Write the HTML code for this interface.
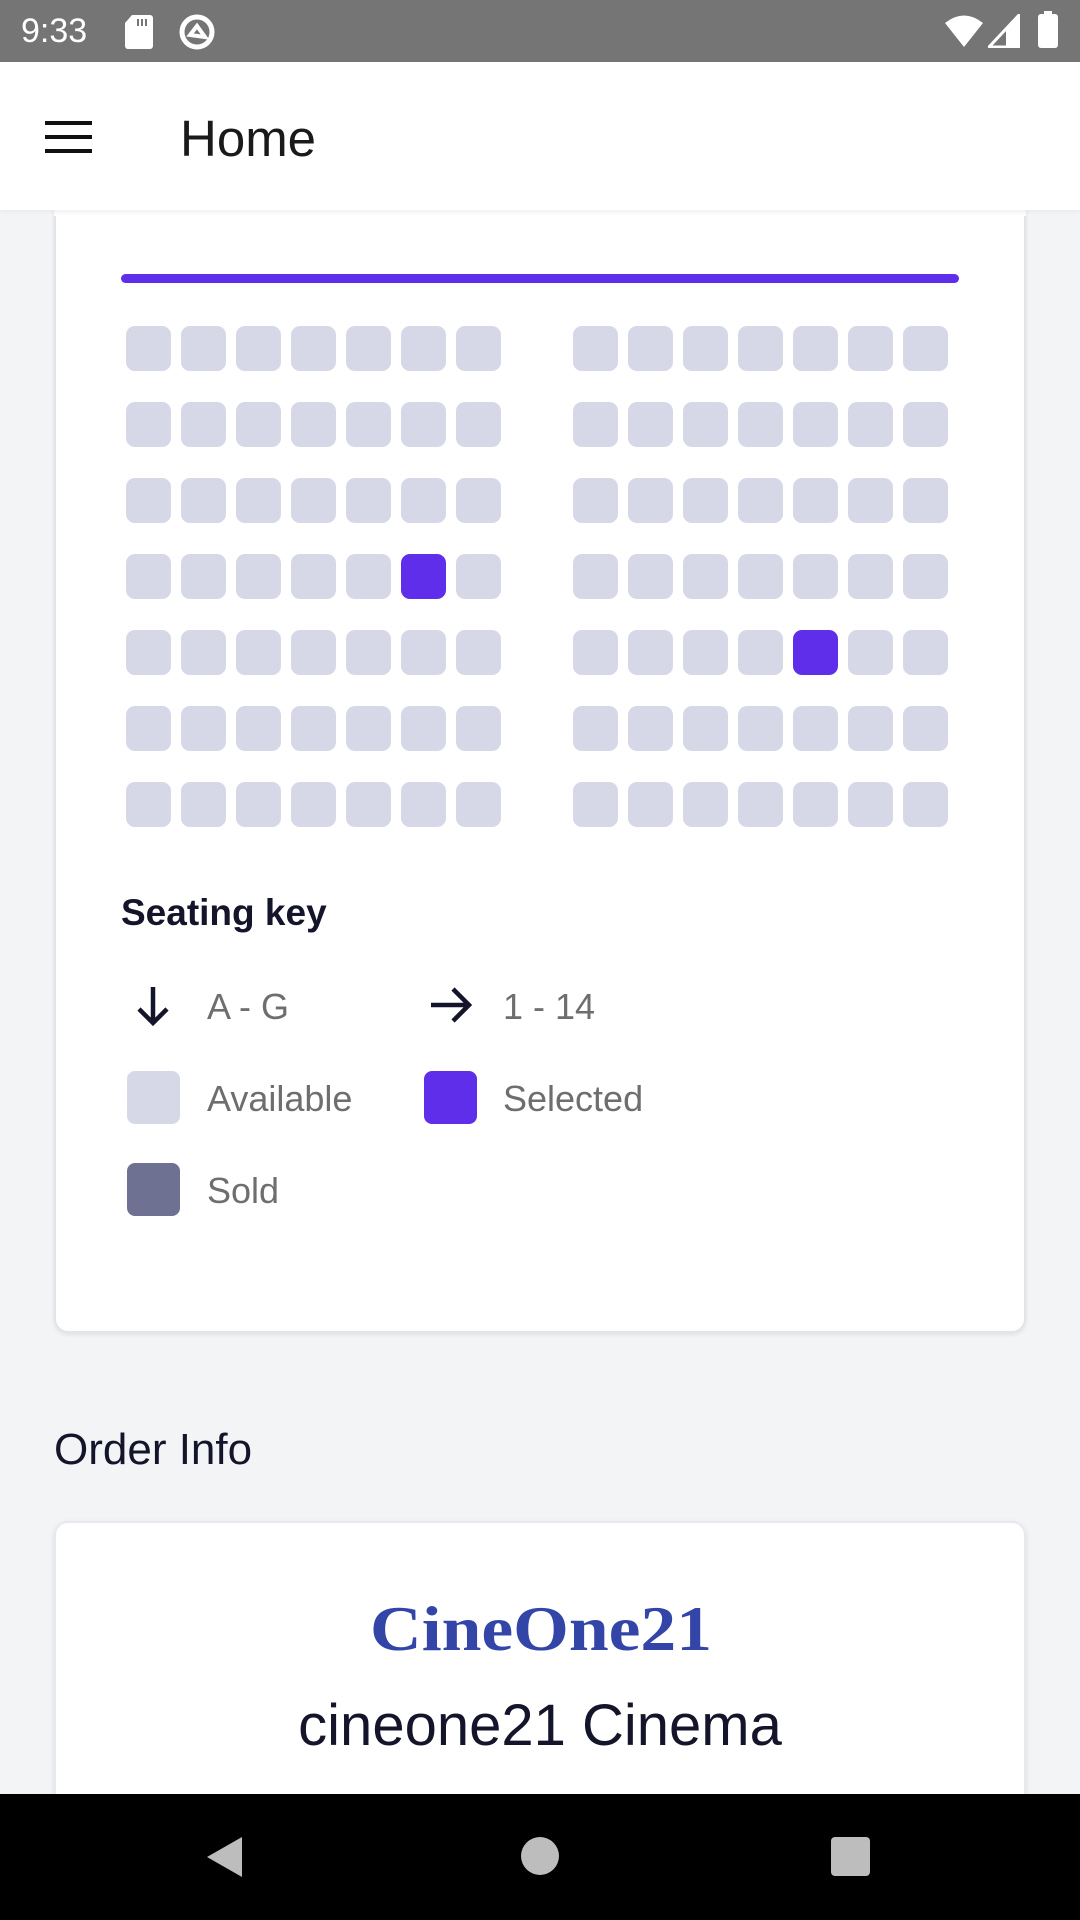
<!DOCTYPE html>
<html style="overflow:hidden;width:1080px;height:1920px"><head><meta charset="utf-8"><style>
*{margin:0;padding:0;box-sizing:border-box}
html,body{overflow:hidden}
body{width:1080px;height:1920px;background:#f3f4f6;font-family:"Liberation Sans",Roboto,sans-serif;position:relative;overflow:hidden}
.abs{position:absolute}
.seat{position:absolute;width:45px;height:45px;border-radius:9px;background:#d7d8e7}
.sel{background:#5f2eea}
.key{position:absolute;font-size:36px;color:#6e6e6e;line-height:1}
</style></head><body>
<!-- status bar -->
<div class="abs" style="left:0;top:0;width:1080px;height:62px;background:#757575"></div>
<div class="abs" style="left:21px;top:12px;font-size:34px;color:#fff;line-height:38px">9:33</div>
<svg class="abs" style="left:124px;top:15px" width="30" height="34" viewBox="0 0 30 34"><path d="M8 0H26a3 3 0 0 1 3 3V31a3 3 0 0 1-3 3H4a3 3 0 0 1-3-3V8Z" fill="#fff"/><rect x="13" y="4" width="2" height="7" fill="#757575"/><rect x="17" y="4" width="2" height="7" fill="#757575"/><rect x="21" y="4" width="2" height="7" fill="#757575"/></svg>
<svg class="abs" style="left:178px;top:13px" width="38" height="38" viewBox="0 0 38 38"><circle cx="19" cy="19" r="15" fill="none" stroke="#fff" stroke-width="5"/><path d="M12 22 L19 13 L27 24 Z" fill="none" stroke="#fff" stroke-width="4"/></svg>
<svg class="abs" style="left:944px;top:14px" width="40" height="34" viewBox="0 0 40 34"><path d="M1 9 Q20 -6 39 9 L20 33 Z" fill="#fff"/></svg>
<svg class="abs" style="left:988px;top:14px" width="32" height="34" viewBox="0 0 32 34"><path d="M31 1 V33 H1 Z" fill="none" stroke="#fff" stroke-width="3"/><path d="M31 1 V33 H18 V16 Z" fill="#fff"/></svg>
<div class="abs" style="left:1038px;top:14px;width:20px;height:34px;background:#fff;border-radius:3px"></div>
<div class="abs" style="left:1044px;top:11px;width:8px;height:4px;background:#fff"></div>
<!-- app bar -->
<div class="abs" style="left:0;top:62px;width:1080px;height:148px;background:#fff;box-shadow:0 2px 3px rgba(0,0,0,0.04)"></div>
<div class="abs" style="left:45px;top:121px;width:47px;height:4px;background:#111"></div>
<div class="abs" style="left:45px;top:135px;width:47px;height:4px;background:#111"></div>
<div class="abs" style="left:45px;top:149px;width:47px;height:4px;background:#111"></div>
<div class="abs" style="left:180px;top:109px;font-size:51px;color:#1a1a1a;line-height:60px">Home</div>
<!-- card 1 -->
<div class="abs" style="left:54px;top:150px;width:972px;height:1183px;background:#fff;border:2px solid #e3e4ea;border-top:none;border-radius:0 0 14px 14px;box-shadow:0 2px 4px rgba(0,0,0,0.08);z-index:-1"></div>
<div class="abs" style="left:54px;top:210px;width:972px;height:6px;background:linear-gradient(#f2f2f2,#fff)"></div>
<div class="abs" style="left:121px;top:274px;width:838px;height:9px;border-radius:5px;background:#5f2eea"></div>
<div id="seats"></div>
<div class="abs" style="left:121px;top:893px;font-size:37px;font-weight:bold;color:#14142b;line-height:40px">Seating key</div>
<svg class="abs" style="left:131px;top:983px" width="44" height="44" viewBox="0 0 44 44"><path d="M22 4 V40 M8 26 L22 40 L36 26" fill="none" stroke="#14142b" stroke-width="4.5"/></svg>
<div class="key" style="left:207px;top:989px">A - G</div>
<svg class="abs" style="left:428px;top:983px" width="46" height="44" viewBox="0 0 46 44"><path d="M3 22 H41 M25 6 L41 22 L25 38" fill="none" stroke="#14142b" stroke-width="4.5"/></svg>
<div class="key" style="left:503px;top:989px">1 - 14</div>
<div class="abs" style="left:127px;top:1071px;width:53px;height:53px;border-radius:8px;background:#d7d8e7"></div>
<div class="key" style="left:207px;top:1081px">Available</div>
<div class="abs" style="left:424px;top:1071px;width:53px;height:53px;border-radius:8px;background:#5f2eea"></div>
<div class="key" style="left:503px;top:1081px">Selected</div>
<div class="abs" style="left:127px;top:1163px;width:53px;height:53px;border-radius:8px;background:#6e7191"></div>
<div class="key" style="left:207px;top:1173px">Sold</div>
<!-- order info -->
<div class="abs" style="left:54px;top:1427px;font-size:44px;font-weight:500;color:#14142b;line-height:46px">Order Info</div>
<div class="abs" style="left:54px;top:1521px;width:972px;height:399px;background:#fff;border:2px solid #e8e9ee;border-bottom:none;border-radius:14px 14px 0 0;box-shadow:0 2px 6px rgba(0,0,0,0.1)"></div>
<svg class="abs" style="left:360px;top:1590px" width="360" height="75" viewBox="0 0 360 75"><text x="10" y="60" font-family="Liberation Serif,serif" font-weight="bold" font-size="64" fill="#3346a8" textLength="342" lengthAdjust="spacingAndGlyphs">CineOne21</text></svg>
<div class="abs" style="left:0;width:1080px;top:1693px;text-align:center;font-size:58px;color:#14142b;line-height:66px">cineone21 Cinema</div>
<!-- nav bar -->
<div class="abs" style="left:0;top:1794px;width:1080px;height:126px;background:#000"></div>
<svg class="abs" style="left:204px;top:1835px" width="42" height="44" viewBox="0 0 42 44"><path d="M38 2 V42 L3 22 Z" fill="#bdbdbd"/></svg>
<div class="abs" style="left:521px;top:1837px;width:38px;height:38px;border-radius:50%;background:#bdbdbd"></div>
<div class="abs" style="left:831px;top:1837px;width:39px;height:39px;border-radius:4px;background:#bdbdbd"></div>
<script>
var h='';
for(var r=0;r<7;r++)for(var g=0;g<2;g++)for(var c=0;c<7;c++){
var x=(g?573:126)+c*55,y=326+r*76;
var s=(g==0&&r==3&&c==5)||(g==1&&r==4&&c==4);
h+='<div class="seat'+(s?' sel':'')+'" style="left:'+x+'px;top:'+y+'px"></div>';}
document.getElementById('seats').innerHTML=h;
</script>
</body></html>
